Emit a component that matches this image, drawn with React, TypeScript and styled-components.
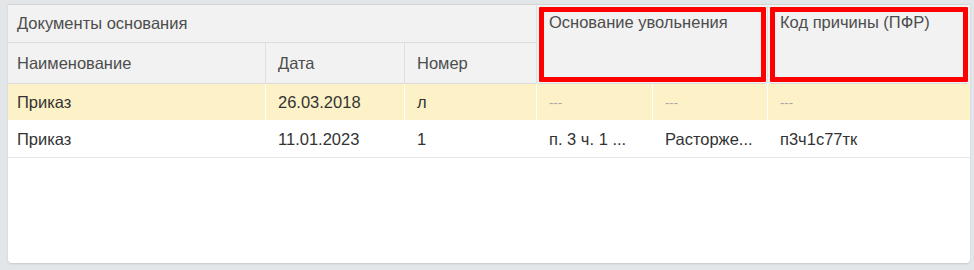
import { Fragment } from "react";
import styled, { createGlobalStyle } from "styled-components";

const GlobalStyle = createGlobalStyle`
    html, body {
        margin: 0;
        padding: 0;
        background: #e3e6e9;
    }
    body {
        font-family: "Liberation Sans", Arial, sans-serif;
        font-size: 16.5px;
    }
`;

interface Row {
    name: string;
    date: string;
    number: string;
    basisShort: string;
    basisText: string;
    code: string;
    current?: boolean;
}

const rows: Row[] = [
    { name: "Приказ", date: "26.03.2018", number: "л", basisShort: "", basisText: "", code: "", current: true },
    { name: "Приказ", date: "11.01.2023", number: "1", basisShort: "п. 3 ч. 1 ...", basisText: "Расторже...", code: "п3ч1с77тк" },
];

const Page = styled.div`
    padding: 4px 4px 7px 8px;
    height: 270px;
    box-sizing: border-box;
    display: flex;
`;

const Panel = styled.div`
    flex: 1;
    background: #fff;
    border-top: 1px solid #d4d4d4;
    border-radius: 0 0 4px 4px;
    box-shadow: 0 1px 2px rgba(0, 0, 0, 0.12);
    overflow: hidden;
`;

const Grid = styled.div`
    display: grid;
    grid-template-columns: 258px 139px 132px 116px 115px 1fr;
    grid-template-rows: 38px 41px;
    grid-auto-rows: 37px;
`;

const HeadCell = styled.div<{ $col: string; $row: string; $top?: boolean; $marked?: boolean; $first?: boolean; $last?: boolean }>`
    grid-column: ${p => p.$col};
    grid-row: ${p => p.$row};
    background: #f2f2f2;
    color: #4d4d4d;
    border-right: ${p => (p.$last ? "none" : "1px solid #e0e0e0")};
    border-bottom: 1px solid #dcdcdc;
    padding: ${p => (p.$top ? "8px 9px 0" : "0 9px")};
    padding-left: ${p => (p.$first ? "9px" : "12px")};
    display: flex;
    align-items: ${p => (p.$top ? "flex-start" : "center")};
    white-space: nowrap;
    ${p => p.$marked && {
        outline: "5px solid #ff0000",
        "outline-offset": "-7px",
        "border-radius": "3px",
    }}
`;

const BodyCell = styled.div<{ $current?: boolean; $empty?: boolean; $first?: boolean; $last?: boolean }>`
    background: ${p => (p.$current ? "#fdf1c7" : "#fff")};
    color: ${p => (p.$empty ? "#a6a6a6" : "#333")};
    font-size: ${p => (p.$empty ? "13px" : "16.5px")};
    border-right: ${p => (p.$last ? "none" : `1px solid ${p.$current ? "#fff" : "transparent"}`)};
    border-bottom: 1px solid ${p => (p.$current ? "#fff" : "#e6e6e6")};
    padding: 0 9px 0 ${p => (p.$first ? "9px" : "12px")};
    display: flex;
    align-items: center;
    white-space: nowrap;
    overflow: hidden;
`;

const Cell = ({ value, current, first, last }: { value: string; current?: boolean; first?: boolean; last?: boolean }) => (
    <BodyCell $current={current} $empty={!value} $first={first} $last={last}>
        {value || "---"}
    </BodyCell>
);

export default function App() {
    return (
        <>
            <GlobalStyle />
            <Page>
                <Panel>
                    <Grid>
                        <HeadCell $col="1 / 4" $row="1" $first>Документы основания</HeadCell>
                        <HeadCell $col="4 / 6" $row="1 / 3" $top $marked>Основание увольнения</HeadCell>
                        <HeadCell $col="6" $row="1 / 3" $top $marked $last>Код причины (ПФР)</HeadCell>
                        <HeadCell $col="1" $row="2" $first>Наименование</HeadCell>
                        <HeadCell $col="2" $row="2">Дата</HeadCell>
                        <HeadCell $col="3" $row="2">Номер</HeadCell>
                        {rows.map((r, i) => (
                            <Fragment key={i}>
                                <Cell value={r.name} current={r.current} first />
                                <Cell value={r.date} current={r.current} />
                                <Cell value={r.number} current={r.current} />
                                <Cell value={r.basisShort} current={r.current} />
                                <Cell value={r.basisText} current={r.current} />
                                <Cell value={r.code} current={r.current} last />
                            </Fragment>
                        ))}
                    </Grid>
                </Panel>
            </Page>
        </>
    );
}
